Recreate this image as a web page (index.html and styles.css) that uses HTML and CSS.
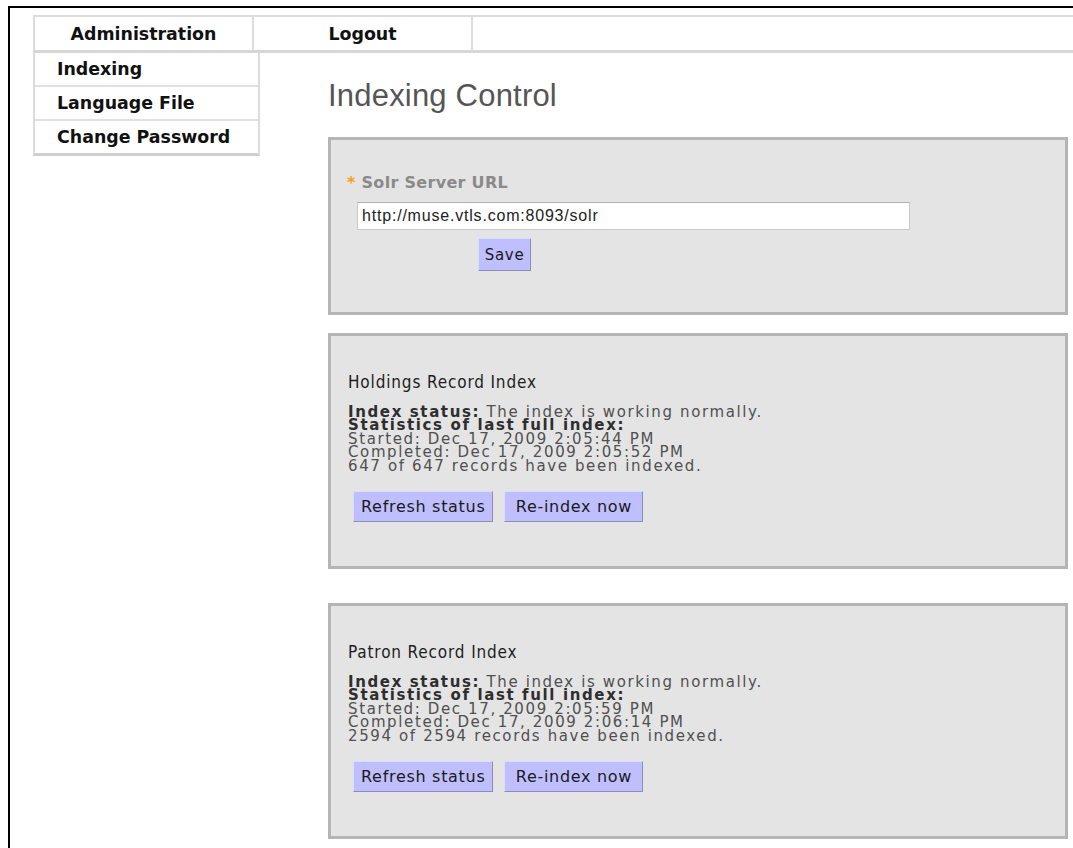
FILE: index.html
```html
<!DOCTYPE html>
<html lang="en">
<head>
<meta charset="utf-8">
<title>Indexing Control</title>
<link rel="stylesheet" href="styles.css">
</head>
<body>
<div class="frame">
  <nav class="topnav">
    <a class="tab tab-main" href="#">Administration</a>
    <a class="tab tab-main" href="#">Logout</a>
    <span class="tab tab-fill"></span>
  </nav>
  <div class="layout">
    <ul class="sidemenu">
      <li><a href="#">Indexing</a></li>
      <li><a href="#">Language File</a></li>
      <li><a href="#">Change Password</a></li>
    </ul>
    <main class="content">
      <h1 class="page-title">Indexing Control</h1>

      <section class="panel panel-config">
        <div class="field-label"><span class="req">*</span> Solr Server URL</div>
        <input class="url-input" type="text" value="http://muse.vtls.com:8093/solr">
        <div class="save-row"><button class="btn btn-save" type="button">Save</button></div>
      </section>

      <section class="panel panel-index">
        <h2 class="panel-title">Holdings Record Index</h2>
        <div class="status">
          <div><b>Index status:</b> The index is working normally.</div>
          <div><b>Statistics of last full index:</b></div>
          <div>Started: Dec 17, 2009 2:05:44 PM</div>
          <div>Completed: Dec 17, 2009 2:05:52 PM</div>
          <div>647 of 647 records have been indexed.</div>
        </div>
        <div class="actions">
          <button class="btn" type="button">Refresh status</button>
          <button class="btn" type="button">Re-index now</button>
        </div>
      </section>

      <section class="panel panel-index panel-last">
        <h2 class="panel-title">Patron Record Index</h2>
        <div class="status">
          <div><b>Index status:</b> The index is working normally.</div>
          <div><b>Statistics of last full index:</b></div>
          <div>Started: Dec 17, 2009 2:05:59 PM</div>
          <div>Completed: Dec 17, 2009 2:06:14 PM</div>
          <div>2594 of 2594 records have been indexed.</div>
        </div>
        <div class="actions">
          <button class="btn" type="button">Refresh status</button>
          <button class="btn" type="button">Re-index now</button>
        </div>
      </section>
    </main>
  </div>
</div>
</body>
</html>
```

FILE: styles.css
```css
html, body {
  margin: 0;
  padding: 0;
  background: #ffffff;
  overflow: hidden;
}

body {
  font-family: "DejaVu Sans", Verdana, sans-serif;
  color: #333;
}

/* outer frame with its black top/left rule */
.frame {
  margin: 6px 0 0 8px;
  border-top: 2px solid #000;
  border-left: 2px solid #000;
  padding: 7px 0 0 23px;
  min-height: 840px;
}

/* top tab bar */
.topnav {
  display: flex;
  height: 33px;
  border-top: 2px solid #dcdcdc;
  border-bottom: 3px solid #d6d6d6;
  border-left: 2px solid #dcdcdc;
}

.tab {
  display: flex;
  align-items: center;
  justify-content: center;
  font-weight: bold;
  font-size: 17.4px;
  color: #111;
  text-decoration: none;
}

.tab-main {
  width: 217px;
  border-right: 2px solid #dcdcdc;
}

.tab-fill {
  flex: 1;
}

/* body: side menu + content */
.layout {
  display: flex;
  align-items: flex-start;
}

.sidemenu {
  list-style: none;
  margin: 0;
  padding: 0;
  width: 223px;
  border-left: 2px solid #dcdcdc;
  border-right: 2px solid #dcdcdc;
  border-bottom: 3px solid #cfcfcf;
}

.sidemenu li {
  height: 32px;
  border-bottom: 2px solid #e0e0e0;
}

.sidemenu li:last-child {
  border-bottom: none;
}

.sidemenu a {
  display: flex;
  align-items: center;
  height: 100%;
  padding-left: 22px;
  font-weight: bold;
  font-size: 17.4px;
  color: #111;
  text-decoration: none;
}

.content {
  flex: 1;
  margin: 0 5px 0 68px;
}

.page-title {
  margin: 25px 0 0;
  font-family: "Liberation Sans", Arial, sans-serif;
  font-weight: normal;
  font-size: 31px;
  line-height: 36px;
  letter-spacing: 0.2px;
  color: #555;
}

/* grey panels */
.panel {
  background: #e4e4e4;
  border: 3px solid #b5b5b5;
  margin-top: 18px;
  padding: 0 0 0 17px;
}

.panel-config {
  margin-top: 23px;
  padding: 33px 0 41px 26px;
}

.panel-last {
  margin-top: 34px;
}

.field-label {
  margin-left: -10px;
  height: 20px;
  line-height: 20px;
  font-weight: bold;
  font-size: 16px;
  letter-spacing: 0.3px;
  color: #8a8a8a;
}

.req {
  color: #f5a21c;
}

.url-input {
  display: block;
  box-sizing: border-box;
  width: 553px;
  height: 28px;
  margin-top: 9px;
  padding: 0 4px;
  border: 1px solid #c9c9c9;
  border-top-color: #b0b0b0;
  background: #fff;
  font-family: "Liberation Sans", Arial, sans-serif;
  font-size: 16px;
  letter-spacing: 0.8px;
  color: #222;
  outline: none;
}

.save-row {
  margin-top: 8px;
  padding-left: 121px;
}

/* lavender push buttons */
.btn {
  box-sizing: border-box;
  min-width: 139px;
  height: 31px;
  padding: 0 7px;
  background: #bfbfff;
  border: 1px solid;
  border-color: #dcdcff #8d8db4 #8d8db4 #dcdcff;
  border-radius: 0;
  font-family: "DejaVu Sans", Verdana, sans-serif;
  font-size: 16px;
  letter-spacing: 0.7px;
  color: #1a1a1a;
}

.btn-save {
  min-width: 0;
  height: 33px;
  width: 53px;
  padding: 0;
  font-size: 15px;
}

.panel-index {
  padding-top: 36px;
  padding-bottom: 44px;
}

.panel-title {
  margin: 0;
  height: 20px;
  line-height: 20px;
  font-family: "DejaVu Sans Condensed", "DejaVu Sans", sans-serif;
  font-weight: normal;
  font-size: 17px;
  letter-spacing: 0.85px;
  color: #1e1e1e;
}

.status {
  margin-top: 14px;
  font-size: 15px;
  line-height: 13.4px;
  letter-spacing: 1.62px;
  color: #505050;
}

.status b {
  color: #2e2e2e;
}

.actions {
  display: flex;
  gap: 11px;
  margin: 18px 0 0 5px;
}
```
